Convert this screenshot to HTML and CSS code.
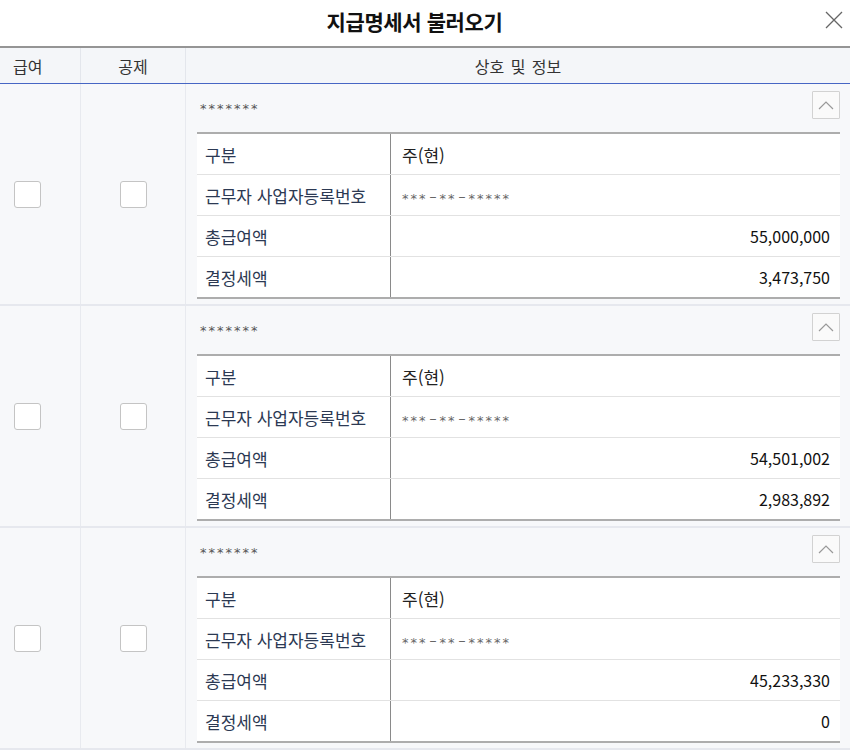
FILE: index.html
```html
<!DOCTYPE html>
<html lang="ko">
<head>
<meta charset="utf-8">
<title>지급명세서 불러오기</title>
<link rel="stylesheet" href="styles.css">
</head>
<body>
<div class="dialog">
  <div class="titlebar">
    <h1 class="title">지급명세서 불러오기</h1>
    <button class="close" aria-label="닫기">
      <svg width="18" height="18" viewBox="0 0 18 18"><path d="M1 1L17 17M17 1L1 17" stroke="#666" stroke-width="1.3" fill="none"/></svg>
    </button>
  </div>
  <div class="grid">
    <div class="head">
      <div class="hc c1">급여</div>
      <div class="hc c2">공제</div>
      <div class="hc c3">상호 및 정보</div>
    </div>

    <div class="row">
      <div class="cell c1"><span class="chk"></span></div>
      <div class="cell c2"><span class="chk"></span></div>
      <div class="cell c3">
        <div class="info-top"><span class="mask"><span class="ast">*******</span></span><button class="fold"><svg width="16" height="10" viewBox="0 0 16 10"><path d="M1 9L8 2L15 9" stroke="#999" stroke-width="1.2" fill="none"/></svg></button></div>
        <div class="itable">
          <div class="ir"><div class="il">구분</div><div class="iv">주(현)</div></div>
          <div class="ir"><div class="il">근무자 사업자등록번호</div><div class="iv mask2"><span class="ast">***</span><span class="dash">-</span><span class="ast">**</span><span class="dash">-</span><span class="ast">*****</span></div></div>
          <div class="ir"><div class="il">총급여액</div><div class="iv num">55,000,000</div></div>
          <div class="ir"><div class="il">결정세액</div><div class="iv num">3,473,750</div></div>
        </div>
      </div>
    </div>

    <div class="row">
      <div class="cell c1"><span class="chk"></span></div>
      <div class="cell c2"><span class="chk"></span></div>
      <div class="cell c3">
        <div class="info-top"><span class="mask"><span class="ast">*******</span></span><button class="fold"><svg width="16" height="10" viewBox="0 0 16 10"><path d="M1 9L8 2L15 9" stroke="#999" stroke-width="1.2" fill="none"/></svg></button></div>
        <div class="itable">
          <div class="ir"><div class="il">구분</div><div class="iv">주(현)</div></div>
          <div class="ir"><div class="il">근무자 사업자등록번호</div><div class="iv mask2"><span class="ast">***</span><span class="dash">-</span><span class="ast">**</span><span class="dash">-</span><span class="ast">*****</span></div></div>
          <div class="ir"><div class="il">총급여액</div><div class="iv num">54,501,002</div></div>
          <div class="ir"><div class="il">결정세액</div><div class="iv num">2,983,892</div></div>
        </div>
      </div>
    </div>

    <div class="row">
      <div class="cell c1"><span class="chk"></span></div>
      <div class="cell c2"><span class="chk"></span></div>
      <div class="cell c3">
        <div class="info-top"><span class="mask"><span class="ast">*******</span></span><button class="fold"><svg width="16" height="10" viewBox="0 0 16 10"><path d="M1 9L8 2L15 9" stroke="#999" stroke-width="1.2" fill="none"/></svg></button></div>
        <div class="itable">
          <div class="ir"><div class="il">구분</div><div class="iv">주(현)</div></div>
          <div class="ir"><div class="il">근무자 사업자등록번호</div><div class="iv mask2"><span class="ast">***</span><span class="dash">-</span><span class="ast">**</span><span class="dash">-</span><span class="ast">*****</span></div></div>
          <div class="ir"><div class="il">총급여액</div><div class="iv num">45,233,330</div></div>
          <div class="ir"><div class="il">결정세액</div><div class="iv num">0</div></div>
        </div>
      </div>
    </div>
  </div>
</div>
</body>
</html>
```
FILE: styles.css
```css
* { box-sizing: border-box; }
html, body { margin: 0; padding: 0; background: #fff; }
body {
  font-family: "Noto Sans CJK KR", "Noto Sans", sans-serif;
  color: #222;
  width: 850px;
  height: 755px;
  overflow: hidden;
}
.titlebar {
  position: relative;
  height: 46px;
  display: flex;
  align-items: center;
  justify-content: center;
  padding-right: 21px;
}
.title {
  margin: 0;
  font-size: 21px;
  font-weight: 700;
  color: #111;
  letter-spacing: -0.4px;
  line-height: 1;
  padding-bottom: 4px;
}
.close {
  position: absolute;
  right: 6px;
  top: 10px;
  width: 20px;
  height: 20px;
  padding: 0;
  border: 0;
  background: transparent;
  display: flex;
  align-items: center;
  justify-content: center;
}
.head {
  display: grid;
  grid-template-columns: 81px 105px 1fr;
  height: 38px;
  background: #f4f6f9;
  border-top: 2px solid #959595;
  border-bottom: 1px solid #4766c4;
}
.hc {
  display: flex;
  align-items: center;
  justify-content: center;
  font-size: 16px;
  color: #333;
  border-right: 1px solid #e3e6ec;
  word-spacing: 2px;
}
.hc.c1 { justify-content: flex-start; padding-left: 13px; }
.hc.c3 { border-right: 0; }
.row {
  display: grid;
  grid-template-columns: 81px 105px 1fr;
  background: #f7f8fa;
  border-bottom: 2px solid #e6e8ee;
}
.cell {
  border-right: 1px solid #e8eaef;
  display: flex;
  align-items: center;
  justify-content: center;
}
.cell.c1 { justify-content: flex-start; padding-left: 14px; }
.cell.c3 {
  border-right: 0;
  display: block;
  padding: 7px 10px 5px 11px;
}
.chk {
  display: block;
  width: 27px;
  height: 27px;
  background: #fff;
  border: 1px solid #c4c4c4;
  border-radius: 3px;
}
.info-top {
  display: flex;
  align-items: center;
  justify-content: space-between;
  height: 28px;
  margin-bottom: 13px;
}
.mask, .mask2 {
  font-family: "DejaVu Sans", sans-serif;
}
.mask {
  font-size: 13px;
  color: #555;
  letter-spacing: 2px;
  padding-left: 3px;
}
.ast {
  display: inline-block;
  transform: translateY(3px);
}
.fold {
  width: 28px;
  height: 28px;
  padding: 0;
  border: 1px solid #d2d2d2;
  background: #fafafa;
  display: flex;
  align-items: center;
  justify-content: center;
  border-radius: 1px;
}
.itable {
  background: #fff;
  border-top: 2px solid #adadad;
  border-bottom: 2px solid #adadad;
}
.ir {
  display: grid;
  grid-template-columns: 194px 1fr;
  height: 41px;
  border-bottom: 1px solid #e2e2e2;
}
.ir:last-child { height: 40px; border-bottom: 0; }
.il {
  display: flex;
  align-items: center;
  padding-left: 8px;
  font-size: 17px;
  color: #2c3953;
  border-right: 1px solid #8a8a8a;
}
.iv {
  display: flex;
  align-items: center;
  padding: 0 10px 0 11px;
  font-size: 17px;
  color: #222;
}
.iv.num { justify-content: flex-end; color: #111; font-size: 16px; }
.iv.mask2 { font-size: 13px; color: #666; letter-spacing: 2px; }
.dash {
  display: inline-block;
  width: 8px;
  text-align: center;
  letter-spacing: 0;
  margin: 0 3px 0 1px;
  transform: translateY(1px) scaleX(1.7);
}
```
